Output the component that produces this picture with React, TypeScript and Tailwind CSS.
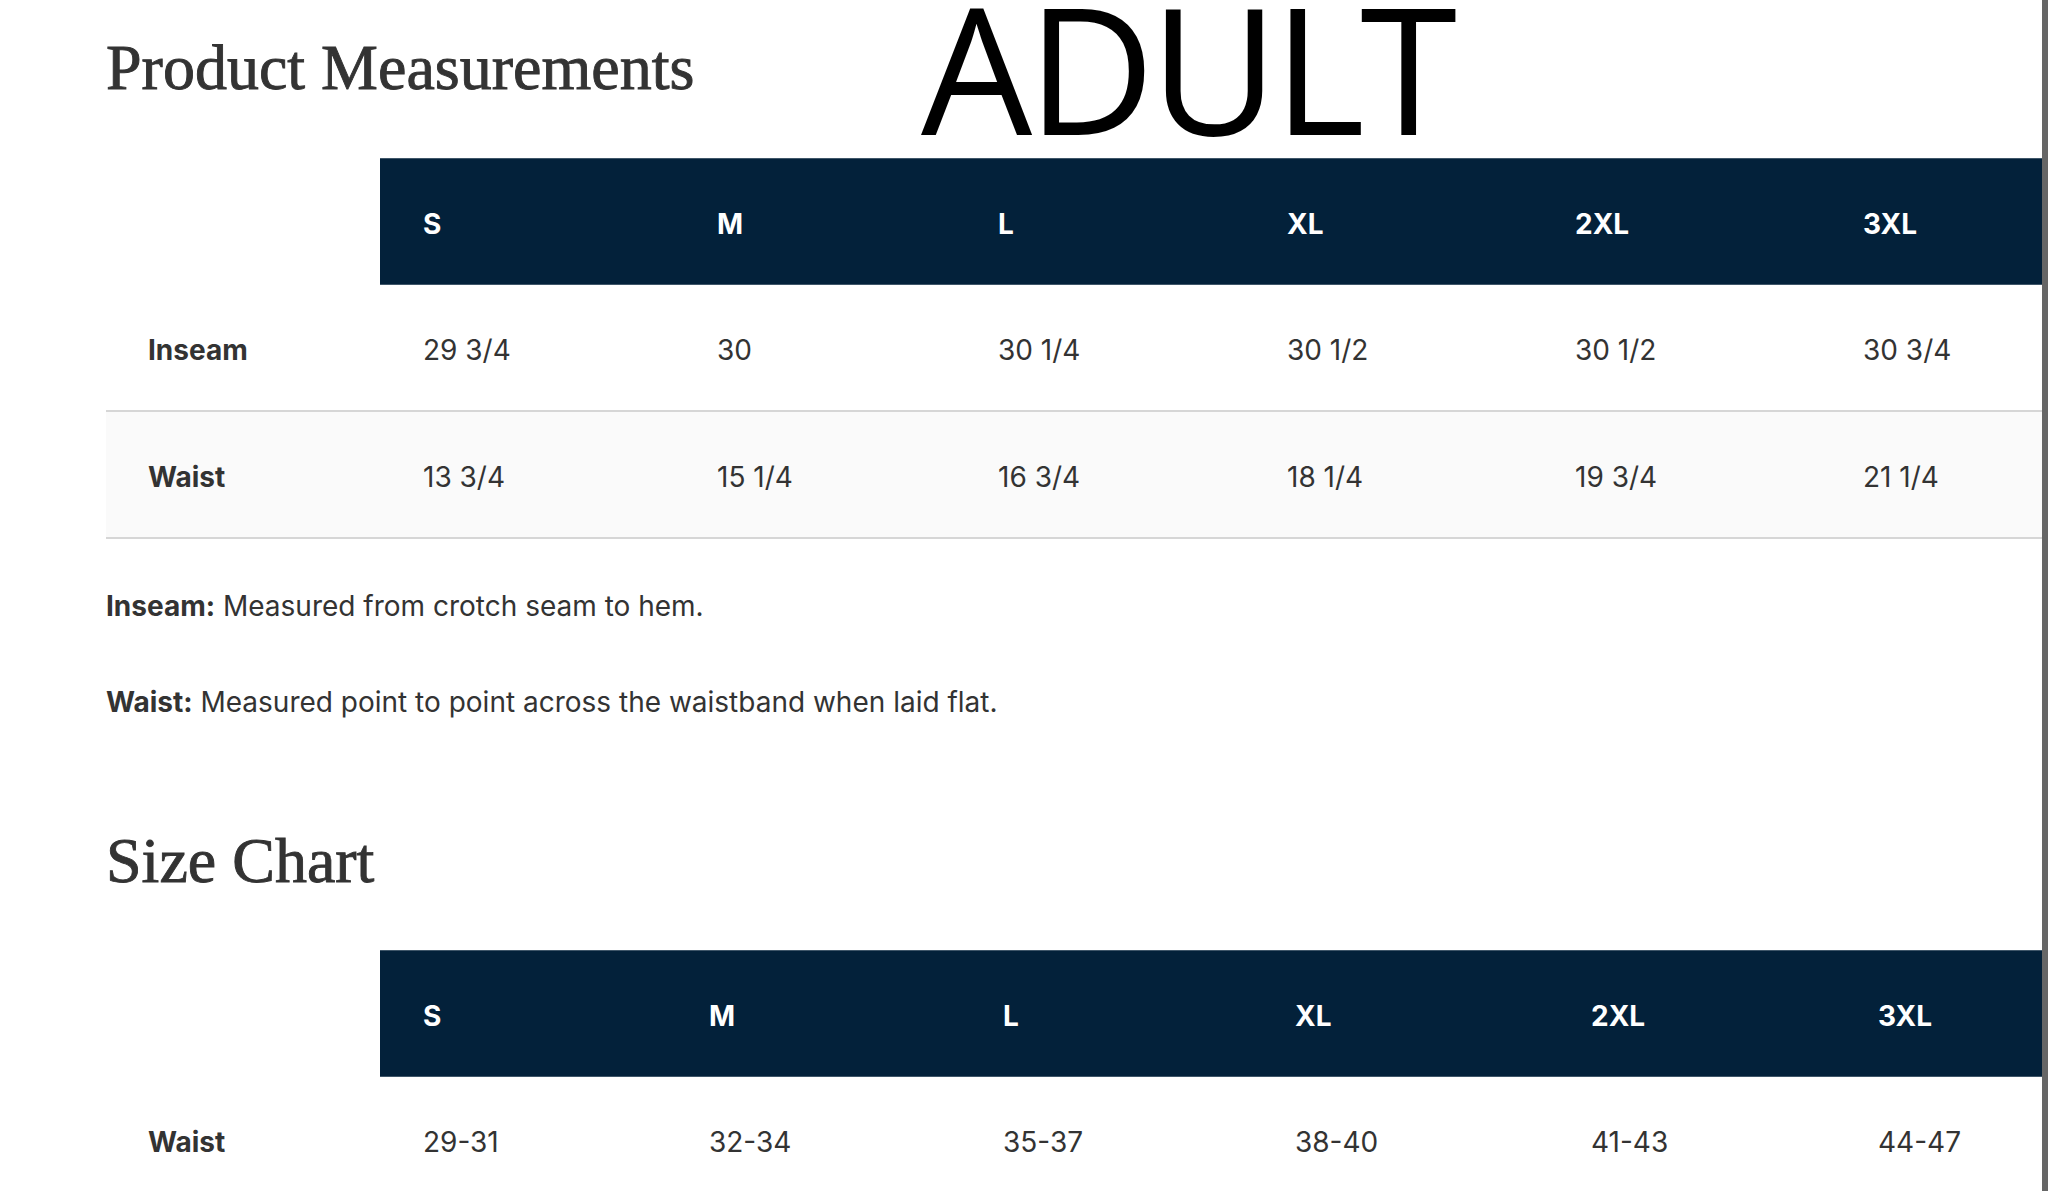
import React from 'react';

type Table = {
  cols: string;
  sizes: string[];
  rows: { label: string; values: string[]; shaded?: boolean }[];
};

const measurements: Table = {
  cols: 'grid-cols-[274px_294px_281px_289px_288px_288px_1fr]',
  sizes: ['S', 'M', 'L', 'XL', '2XL', '3XL'],
  rows: [
    { label: 'Inseam', values: ['29 3/4', '30', '30 1/4', '30 1/2', '30 1/2', '30 3/4'] },
    { label: 'Waist', values: ['13 3/4', '15 1/4', '16 3/4', '18 1/4', '19 3/4', '21 1/4'], shaded: true },
  ],
};

const sizeChart: Table = {
  cols: 'grid-cols-[274px_286px_294px_292px_296px_287px_1fr]',
  sizes: ['S', 'M', 'L', 'XL', '2XL', '3XL'],
  rows: [{ label: 'Waist', values: ['29-31', '32-34', '35-37', '38-40', '41-43', '44-47'] }],
};

const SizeTable: React.FC<{ table: Table }> = ({ table }) => (
  <div className="font-['Inter',sans-serif] text-[28px] text-[#333]">
    <div className={`grid ${table.cols} h-[127px]`}>
      <div />
      {table.sizes.map((s) => (
        <div
          key={s}
          className="flex items-center pl-[43px] pt-[5px] bg-[#03213a] border-y border-[#3f5669] font-bold text-white"
        >
          {s}
        </div>
      ))}
    </div>
    {table.rows.map((row) => (
      <div
        key={row.label}
        className={`grid ${table.cols} h-[127px] border-b-2 border-[#d6d6d6] ${row.shaded ? 'bg-[#fafafa]' : 'bg-white'}`}
      >
        <div className="flex items-center pl-[42px] pt-[5px] font-bold">{row.label}</div>
        {row.values.map((v, i) => (
          <div key={i} className="flex items-center pl-[43px] pt-[5px] whitespace-nowrap">
            {v}
          </div>
        ))}
      </div>
    ))}
  </div>
);

export default function App() {
  return (
    <div className="flex h-[1191px] w-full overflow-hidden bg-white">
      <div className="flex-1 overflow-hidden pl-[106px]">
        {/* Title row */}
        <div className="flex h-[158px] items-start">
          <h2 className="w-[815px] shrink-0 mt-[36px] font-['Liberation_Serif',serif] text-[64px] leading-none text-[#333] [-webkit-text-stroke:0.9px_#333]">
            Product Measurements
          </h2>
          <div className="mt-[2px] font-['Open_Sans',sans-serif] text-[176px] font-medium leading-[130px] tracking-[-5px] text-black whitespace-nowrap">
            ADULT
          </div>
        </div>

        <SizeTable table={measurements} />

        <div className="font-['Inter',sans-serif] text-[28px] leading-none text-[#333]">
          <p className="mt-[53px]">
            <span className="font-bold">Inseam:</span> Measured from crotch seam to hem.
          </p>
          <p className="mt-[68px]">
            <span className="font-bold">Waist:</span> Measured point to point across the waistband when laid flat.
          </p>
        </div>

        <h2 className="mt-[113px] font-['Liberation_Serif',serif] text-[64px] leading-none text-[#333] [-webkit-text-stroke:0.9px_#333]">
          Size Chart
        </h2>

        <div className="mt-[57px]">
          <SizeTable table={sizeChart} />
        </div>
      </div>
      <div className="w-[6px] shrink-0 bg-[#666]" />
    </div>
  );
}
